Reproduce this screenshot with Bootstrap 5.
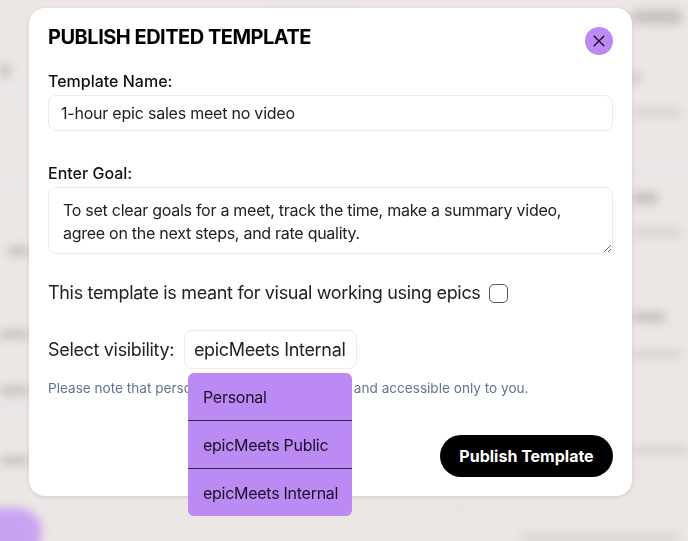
<!DOCTYPE html><html lang="en">
<head>
  <meta charset="UTF-8">
  <meta name="viewport" content="width=device-width, initial-scale=1.0">
  <title>Publish Edited Template</title>
  <link href="https://cdn.jsdelivr.net/npm/bootstrap@5.3.0/dist/css/bootstrap.min.css" rel="stylesheet">
  <style>
    html, body { height: 541px; overflow: hidden; }
    body { background-color: #ece7e5; font-family: Inter, "Liberation Sans", sans-serif; color: #111; position: relative; }
    .backdrop-layer { position: absolute; inset: 0; filter: blur(5px); }
    .blot { position: absolute; display: block; }
    .blot-grey { background: #c6c0bf; border-radius: 4px; }
    .blot-faint { background: #d8d2d2; border-radius: 4px; }
    .blot-lilac { background: #e4dcec; }
    .blot-pill { background: #c9a2f2; border-radius: 24px; }
    .blot-box { border: 2px solid #e2dcdc; border-radius: 6px; }
    .publish-modal { position: absolute; left: 29px; top: 8px; width: 603px; height: 488px; background: #fff; border-radius: 16px; padding: 19px; box-shadow: 0 1px 4px rgba(0,0,0,.12); }
    .publish-title { font-size: 20px; line-height: 20px; font-weight: 650; letter-spacing: -.5px; margin: 0; color: #000; }
    .close-round { width: 28px; height: 28px; border-radius: 50%; background: #bb8af2; border: 0; padding: 0; position: absolute; top: 19px; right: 19px; }
    .close-round svg { display: block; margin: auto; }
    .field-label { font-size: 16px; line-height: 20px; font-weight: 500; margin-bottom: 4px; color: #111; }
    .name-label { margin-top: 24px; }
    .goal-label { margin-top: 32px; }
    .publish-modal .form-control { border: 1.5px solid #efe9ea; border-radius: 8px; color: #222; font-size: 16px; letter-spacing: -.22px; box-shadow: none; }
    .publish-modal .name-input { height: 36px; padding: 0 12px; }
    .publish-modal .goal-input { height: 67px; padding: 11px 14px; line-height: 23px; letter-spacing: -.27px; }
    .big-text { font-size: 18px; line-height: 24px; letter-spacing: -.33px; color: #222; }
    .epic-row { gap: 8px; margin-top: 27px; }
    .visibility-row { gap: 10px; margin-top: 25px; }
    .publish-modal .epic-check { width: 19px; height: 19px; margin: 0; border: 1.5px solid #555; border-radius: 5px; float: none; }
    .visibility-btn { height: 39px; width: 173px; padding: 0 2px 0 0; font-size: 18px; letter-spacing: -.33px; color: #222; background: #fff; border: 1.5px solid #efe9ea; border-radius: 8px; }
    .note-text { font-size: 13.6px; line-height: 18px; color: #64748b; margin: 10px 0 0; }
    .publish-modal .visibility-menu { display: block; position: absolute; left: 159px; top: 365px; width: 164px; min-width: 0; padding: 0; background: #bb8af2; border: 0; border-radius: 6px; overflow: hidden; z-index: 5; }
    .visibility-menu .dropdown-item { height: 48px; display: flex; align-items: center; padding: 0 15px; font-size: 16px; letter-spacing: -.27px; color: #1a1028; }
    .visibility-menu li:first-child .dropdown-item { height: 47px; }
    .visibility-menu li + li .dropdown-item { border-top: 1px solid #2c2438; }
    .publish-btn { position: absolute; right: 19px; bottom: 19px; height: 42px; width: 173px; padding: 0; background: #000; color: #fff; font-size: 16px; font-weight: 700; border-radius: 21px; border: 0; }
  </style>
</head>
<body>
  <div class="backdrop-layer" aria-hidden="true">
    <span class="blot blot-lilac" style="left:270px;top:5px;width:80px;height:4px"></span>
    <span class="blot blot-grey" style="left:0;top:64px;width:10px;height:14px"></span>
    <span class="blot blot-lilac" style="left:0;top:94px;width:29px;height:3px"></span>
    <span class="blot blot-lilac" style="left:0;top:183px;width:29px;height:3px"></span>
    <span class="blot blot-grey" style="left:8px;top:246px;width:21px;height:10px"></span>
    <span class="blot blot-grey" style="left:0;top:330px;width:29px;height:9px"></span>
    <span class="blot blot-grey" style="left:0;top:386px;width:29px;height:9px"></span>
    <span class="blot blot-grey" style="left:0;top:456px;width:29px;height:9px"></span>
    <span class="blot blot-lilac" style="left:0;top:405px;width:29px;height:3px"></span>
    <span class="blot blot-pill" style="left:-30px;top:508px;width:72px;height:48px"></span>
    <span class="blot blot-grey" style="left:632px;top:10px;width:50px;height:14px"></span>
    <span class="blot blot-grey" style="left:632px;top:72px;width:8px;height:12px"></span>
    <span class="blot blot-faint" style="left:632px;top:108px;width:50px;height:9px"></span>
    <span class="blot blot-grey" style="left:632px;top:192px;width:26px;height:12px"></span>
    <span class="blot blot-faint" style="left:632px;top:228px;width:50px;height:9px"></span>
    <span class="blot blot-lilac" style="left:632px;top:168px;width:56px;height:3px"></span>
    <span class="blot blot-grey" style="left:632px;top:312px;width:34px;height:10px"></span>
    <span class="blot blot-faint" style="left:632px;top:350px;width:50px;height:9px"></span>
    <span class="blot blot-faint" style="left:632px;top:446px;width:56px;height:9px"></span>
    <span class="blot blot-box" style="left:520px;top:470px;width:140px;height:45px"></span>
    <span class="blot blot-box" style="left:446px;top:505px;width:32px;height:32px;border-radius:50%"></span>
    <span class="blot blot-faint" style="left:520px;top:534px;width:160px;height:8px"></span>
  </div>

  <div class="publish-modal">
    <h5 class="publish-title">PUBLISH EDITED TEMPLATE</h5>
    <button type="button" class="close-round" aria-label="Close">
      <svg width="12" height="12" viewBox="0 0 12 12"><path d="M1.2 1.2L10.8 10.8M10.8 1.2L1.2 10.8" stroke="#1c1228" stroke-width="1.4" stroke-linecap="round" fill="none"/></svg>
    </button>

    <label class="form-label field-label d-block name-label">Template Name:</label>
    <input type="text" class="form-control name-input" value="1-hour epic sales meet no video">

    <label class="form-label field-label d-block goal-label">Enter Goal:</label>
    <textarea class="form-control goal-input">To set clear goals for a meet, track the time, make a summary video, agree on the next steps, and rate quality.</textarea>

    <div class="d-flex align-items-center epic-row">
      <span class="big-text">This template is meant for visual working using epics</span>
      <input class="form-check-input epic-check" type="checkbox">
    </div>

    <div class="d-flex align-items-center visibility-row">
      <span class="big-text">Select visibility:</span>
      <button type="button" class="visibility-btn">epicMeets Internal</button>
    </div>

    <p class="note-text">Please note that personal templates are private and accessible only to you.</p>

    <ul class="dropdown-menu visibility-menu">
      <li><a class="dropdown-item" href="#">Personal</a></li>
      <li><a class="dropdown-item" href="#">epicMeets Public</a></li>
      <li><a class="dropdown-item" href="#">epicMeets Internal</a></li>
    </ul>

    <button type="button" class="btn publish-btn">Publish Template</button>
  </div>

  <script src="https://cdn.jsdelivr.net/npm/bootstrap@5.3.0/dist/js/bootstrap.bundle.min.js"></script>
</body>
</html>
